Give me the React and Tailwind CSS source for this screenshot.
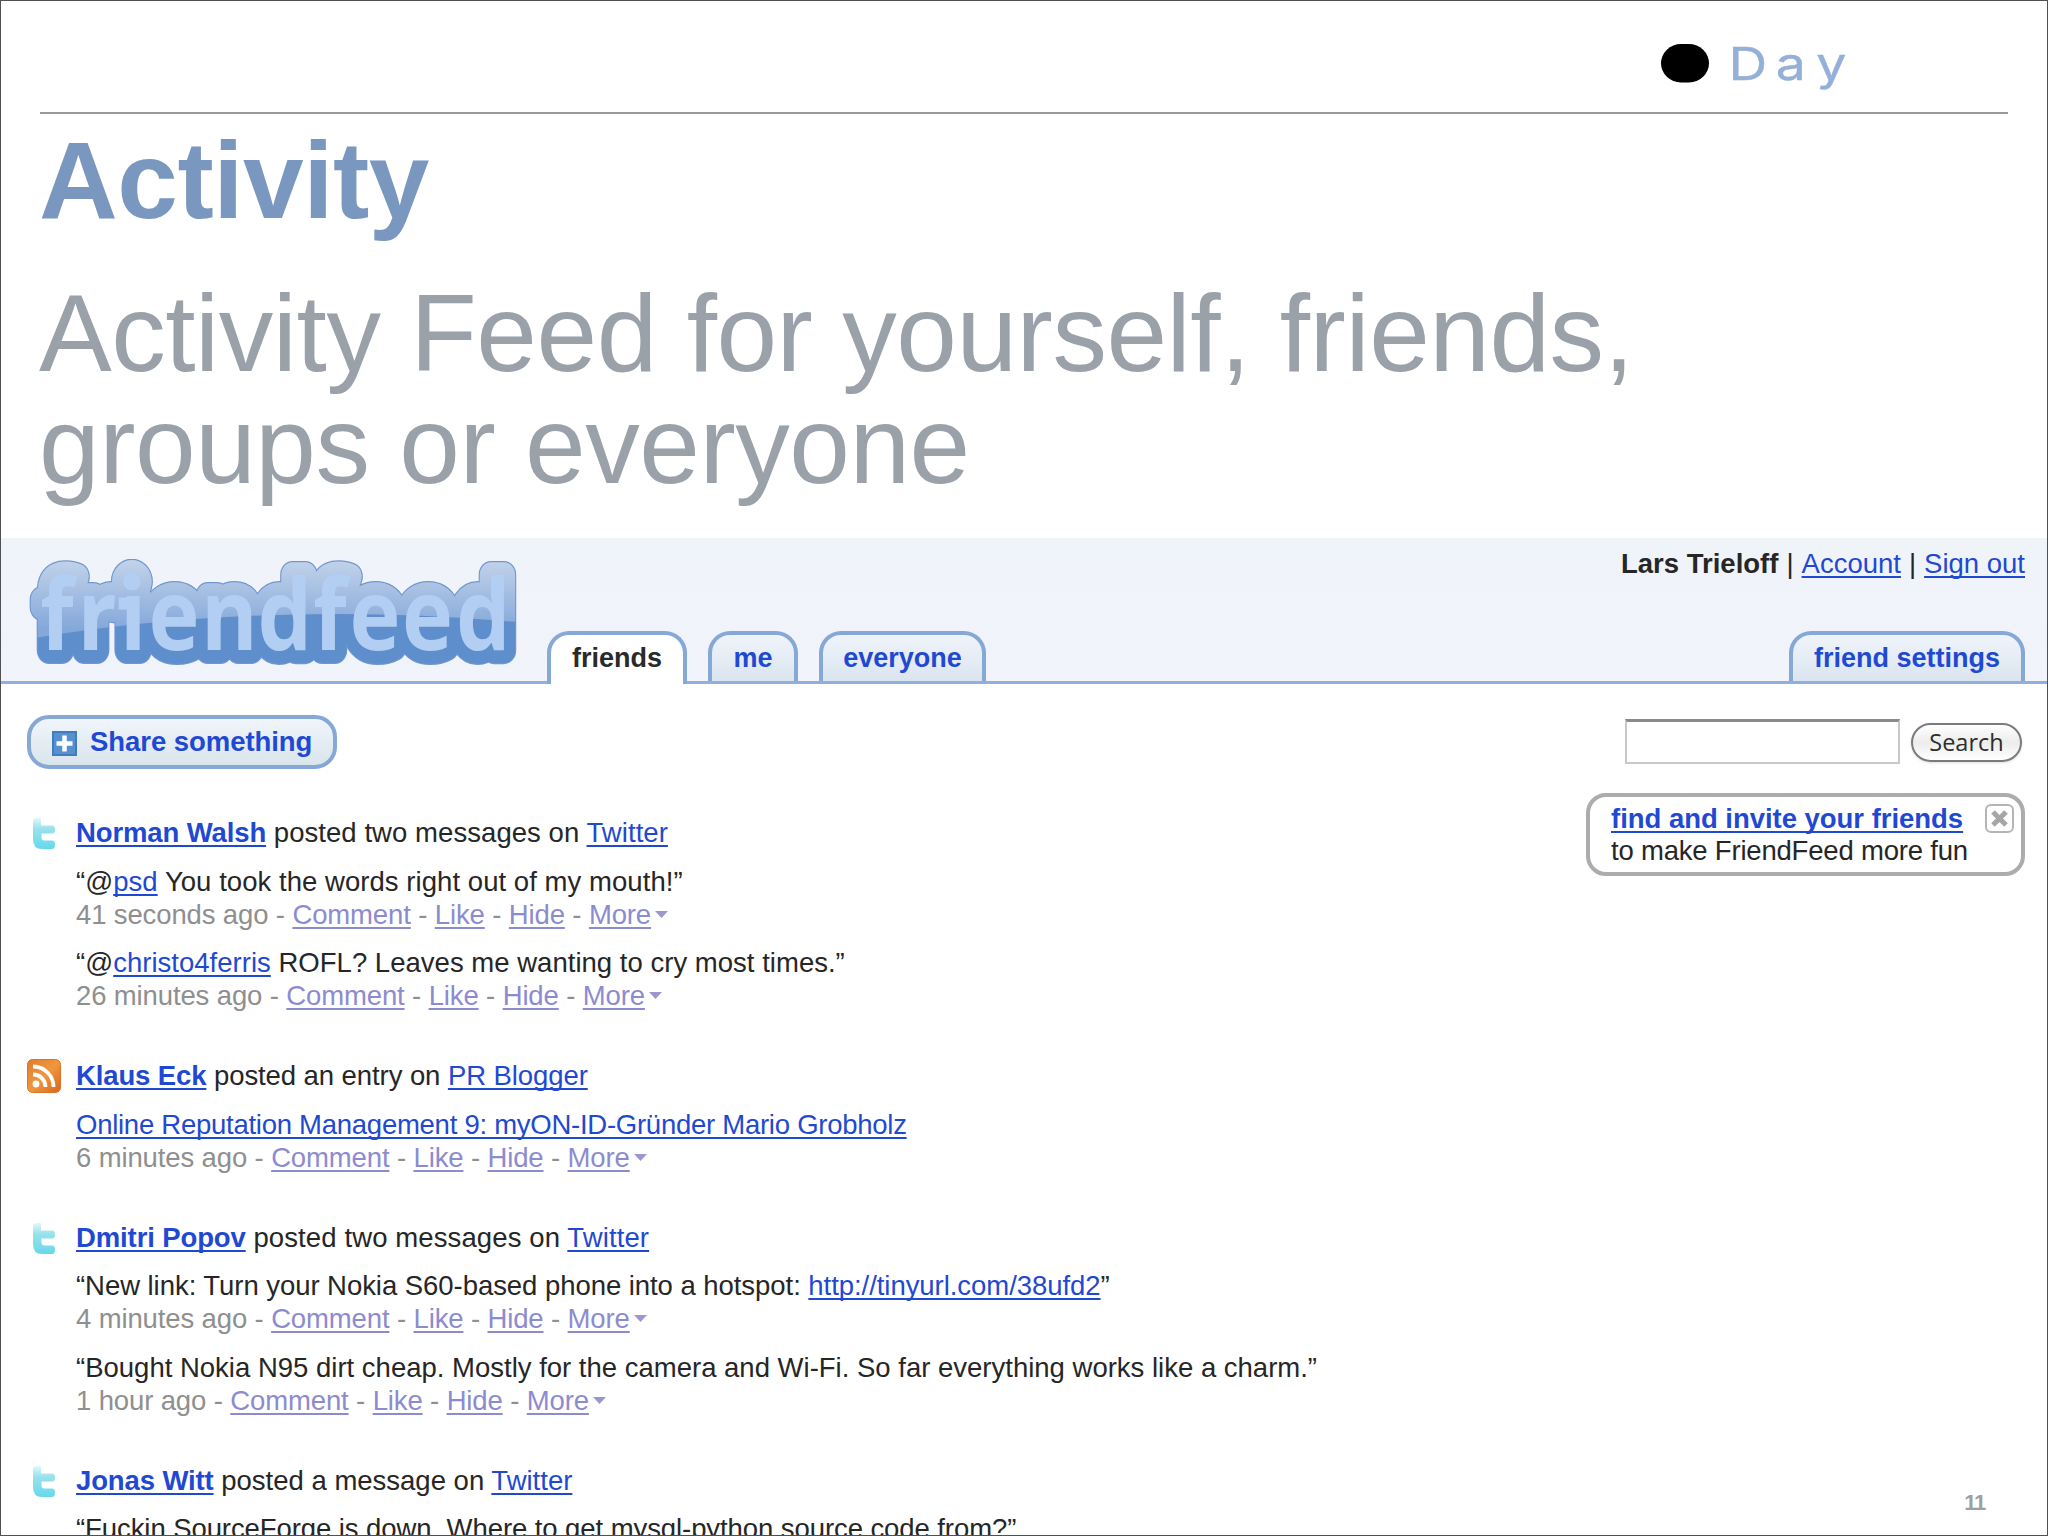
const LINK = "text-[#1f49d2] underline decoration-2 underline-offset-[3px] [text-decoration-skip-ink:none]";

const FEED = [
  {
    icon: "twitter", name: "Norman Walsh", verb: "posted two messages on", source: "Twitter", track: "tracking-[0.06px]",
    items: [
      { parts: ["“@", { text: "psd" }, " You took the words right out of my mouth!”"], time: "41 seconds ago", track: "tracking-[0.05px]" },
      { parts: ["“@", { text: "christo4ferris" }, " ROFL? Leaves me wanting to cry most times.”"], time: "26 minutes ago", track: "tracking-[0.02px]" },
    ],
  },
  {
    icon: "rss", name: "Klaus Eck", verb: "posted an entry on", source: "PR Blogger", track: "tracking-[-0.08px]",
    items: [{ parts: [{ text: "Online Reputation Management 9: myON-ID-Gründer Mario Grobholz" }], time: "6 minutes ago", track: "tracking-[-0.26px]" }],
  },
  {
    icon: "twitter", name: "Dmitri Popov", verb: "posted two messages on", source: "Twitter", track: "tracking-[0.11px]",
    items: [
      { parts: ["“New link: Turn your Nokia S60-based phone into a hotspot: ", { text: "http://tinyurl.com/38ufd2" }, "”"], time: "4 minutes ago", track: "tracking-[-0.05px]" },
      { parts: ["“Bought Nokia N95 dirt cheap. Mostly for the camera and Wi-Fi. So far everything works like a charm.”"], time: "1 hour ago", track: "" },
    ],
  },
  {
    icon: "twitter", name: "Jonas Witt", verb: "posted a message on", source: "Twitter", track: "",
    items: [{ parts: ["“Fuckin SourceForge is down. Where to get mysql-python source code from?”"], track: "tracking-[-0.08px]" }],
  },
];

function TwitterIcon() {
  return (
    <svg className="mt-[2px] ml-[6px] block h-[31px] w-[22px]" viewBox="0 0 22 31">
      <defs>
        <linearGradient id="tw" x1="0" y1="0" x2="0" y2="1">
          <stop offset="0" stopColor="#e2f7f9" />
          <stop offset=".35" stopColor="#98e2ec" />
          <stop offset="1" stopColor="#66d8ea" />
        </linearGradient>
      </defs>
      <path d="M0 3Q0 0 4 0H8V7.500H19Q22 7.500 22 11.500Q22 15.500 19 15.500H8.500V19Q8.500 22.500 11.500 22.500H19Q22 22.500 22 26.500Q22 31 19 31H9Q0 31 0 21Z" fill="url(#tw)" />
    </svg>
  );
}

function RssIcon() {
  return (
    <svg className="block size-[34px]" viewBox="0 0 34 34">
      <defs>
        <linearGradient id="rss" x1="0" y1="0" x2="1" y2="1">
          <stop offset="0" stopColor="#e27a2c" />
          <stop offset=".5" stopColor="#ee983e" />
          <stop offset="1" stopColor="#d9641c" />
        </linearGradient>
      </defs>
      <rect x=".5" y=".5" width="33" height="33" rx="5" fill="url(#rss)" stroke="#d9742e" />
      <circle cx="9" cy="25" r="3.400" fill="#fff" />
      <path d="M6 15.500A12.500 12.500 0 0 1 18.500 28M6 7.500A20.500 20.500 0 0 1 26.500 28" fill="none" stroke="#fff" strokeWidth="3.800" />
    </svg>
  );
}

const LOGO_X = [40.3, 77.5, 120, 148.5, 201, 257.5, 313.3, 349.5, 402, 456].map((x) => (x - 28) / 0.88).join(" ");

function LogoText(props) {
  return (
    <g transform="scale(.88 1)" strokeLinejoin="round" {...props}>
      <text x={LOGO_X} y="91" fontSize="98" fontWeight="700" fontFamily='"Open Sans", sans-serif'>
        friendfeed
      </text>
      {/* slab and heavier dot of the i */}
      <rect x="103" y="38.500" width="12" height="12" />
      <ellipse cx="118" cy="22.500" rx="9.800" ry="8.800" />
    </g>
  );
}

function FriendFeedLogo() {
  return (
    <svg className="block h-[112px] w-[500px]" viewBox="0 0 500 112">
      <defs>
        <linearGradient id="gloss" x1="0" y1="0" x2="0" y2="70" gradientUnits="userSpaceOnUse">
          <stop offset="0" stopColor="#c3d3ea" />
          <stop offset="1" stopColor="#84a8da" />
        </linearGradient>
        <linearGradient id="letters" x1="0" y1="10" x2="0" y2="95" gradientUnits="userSpaceOnUse">
          <stop offset="0" stopColor="#bdd6f3" />
          <stop offset="1" stopColor="#a9c7f2" />
        </linearGradient>
        <mask id="blob">
          <LogoText fill="#fff" stroke="#fff" strokeWidth="25.500" />
        </mask>
      </defs>
      <LogoText fill="#6f96cf" stroke="#6f96cf" strokeWidth="28" />
      <g mask="url(#blob)">
        <rect width="500" height="112" fill="#5e8ecb" />
        <path d="M0 0H500V64Q240 40 0 80Z" fill="url(#gloss)" />
      </g>
      <LogoText fill="#b3cef3" />
    </svg>
  );
}

function DayLogo() {
  return (
    <svg className="block h-[70px] w-[200px]" viewBox="0 0 200 70">
      <rect x="1" y="14" width="48" height="38.500" rx="20" fill="#000" />
      <text x="58 98 132.500" y="50.500" transform="scale(1.180 1)" fontSize="45.500" fontFamily="Inter, sans-serif" fill="#95b0d8" stroke="#95b0d8" strokeWidth=".4">Day</text>
    </svg>
  );
}

function Tab({ children, active, className }) {
  return (
    <div
      className={`flex justify-center rounded-t-[22px] border-x-[4px] border-t-[4px] border-[#85a8d6] pt-[6px] text-[27px] leading-[34px] font-bold ${
        active ? "mb-[-3px] h-[53px] bg-white text-[#2a2a2a]" : "h-[50px] bg-linear-to-b from-[#eff4fa] to-[#dbe5ef] text-[#1f49d2]"
      } ${className}`}
    >
      {children}
    </div>
  );
}

function Meta({ time }) {
  return (
    <div className="flex items-center text-[#8f8f8f]">
      <span className="tracking-[-0.13px] whitespace-pre">
        {time}
        {["Comment", "Like", "Hide", "More"].map((label) => (
          <span key={label}>
            {" - "}
            <a className="text-[#8d8bd0] underline decoration-2 underline-offset-[3px] [text-decoration-skip-ink:none]">{label}</a>
          </span>
        ))}
      </span>
      <svg className="ml-[4px] h-[7px] w-[13px]" viewBox="0 0 13 7">
        <path d="M0 0H13L6.500 7Z" fill="#9a98cf" />
      </svg>
    </div>
  );
}

function Entry({ entry }) {
  return (
    <div className="flex">
      <div className="w-[49px] shrink-0">{entry.icon === "rss" ? <RssIcon /> : <TwitterIcon />}</div>
      <div>
        <div className={`whitespace-pre ${entry.track}`}>
          <a className={`${LINK} font-bold tracking-[-0.12px]`}>{entry.name}</a> {entry.verb} <a className={LINK}>{entry.source}</a>
        </div>
        {entry.items.map((item, i) => (
          <div key={i} className="mt-[15.500px]">
            <div className={`whitespace-pre ${item.track}`}>
              {item.parts.map((part, j) => (part.text ? <a key={j} className={LINK}>{part.text}</a> : part))}
            </div>
            {item.time && <Meta time={item.time} />}
          </div>
        ))}
      </div>
    </div>
  );
}

export default function App() {
  return (
    <div className="flex h-[1536px] w-[2048px] flex-col overflow-hidden border border-[#505054] bg-white font-['Liberation_Sans',Arial,sans-serif] text-[27.5px] leading-[33px] text-[#262626]">
      <header className="mx-[39px] flex h-[113px] shrink-0 justify-end border-b-2 border-[#9b9b9b] pt-[29px] pr-[148px]">
        <DayLogo />
      </header>

      <div className="h-[424px] shrink-0 pl-[38px] text-[109px] tracking-[-0.47px]">
        <h1 className="pt-[5px] leading-[122px] font-bold text-[#7a98bf]">Activity</h1>
        <p className="mt-[36px] leading-[112px] whitespace-pre text-[#9aa1a8]">{"Activity Feed for yourself, friends,\ngroups or everyone"}</p>
      </div>

      {/* Site header with tabs */}
      <div className="flex h-[146px] shrink-0 justify-between border-b-[3px] border-[#8fb0da] bg-linear-to-b from-[#eff4f9] to-[#f2f3fb] pr-[22px] pl-[27px]">
        <div className="flex items-end">
          <div className="mb-[10px] w-[519px]">
            <FriendFeedLogo />
          </div>
          <div className="flex items-end gap-[21px]">
            <Tab active className="w-[140px]">friends</Tab>
            <Tab className="w-[90px]">me</Tab>
            <Tab className="w-[167px]">everyone</Tab>
          </div>
        </div>
        <div className="flex flex-col items-end justify-between pt-[9px]">
          <div className="flex gap-[8px]">
            <b>Lars Trieloff</b>
            <span>|</span>
            <a className={LINK}>Account</a>
            <span>|</span>
            <a className={LINK}>Sign out</a>
          </div>
          <Tab className="w-[236px]">friend settings</Tab>
        </div>
      </div>

      <div className="flex min-h-0 flex-1 justify-between pr-[22px] pl-[26px]">
        <div>
          <div className="mt-[31px] flex h-[54px] w-[310px] items-center rounded-[22px] border-[4px] border-[#85a8d6] bg-linear-to-b from-[#f0f5fb] to-[#d9e5ec] pl-[21px] font-bold tracking-[-0.05px] text-[#1f49d2]">
            <svg className="mt-[3px] mr-[13px] size-[25px]" viewBox="0 0 25 25">
              <rect x="1" y="1" width="23" height="23" fill="#5790d0" stroke="#3f7cc0" strokeWidth="2" />
              <path d="M12.500 4.500V20.500M4.500 12.500H20.500" stroke="#fff" strokeWidth="4.500" />
            </svg>
            <span className="pb-[2px]">Share something</span>
          </div>
          <div className="mt-[47.400px] flex flex-col gap-[46.900px]">
            {FEED.map((entry) => (
              <Entry key={entry.name} entry={entry} />
            ))}
          </div>
        </div>

        <aside className="flex flex-col items-end">
          <div className="mt-[35px] flex items-center gap-[11px]">
            <div className="h-[45px] w-[275px] border-2 border-t-[3px] border-[#c9c9cd] border-t-[#8a8a8e]" />
            <div className="mt-[1px] mr-[3px] flex h-[39px] w-[111px] items-center justify-center rounded-full border-[2px] border-[#7b7b7b] bg-linear-to-b from-white via-[#ececec] to-white font-['Open_Sans',sans-serif] text-[23.500px] text-[#2d2d2d] shadow-sm">
              Search
            </div>
          </div>
          <div className="mt-[29px] flex h-[83px] w-[439px] justify-between rounded-[20px] border-[4px] border-[#acacae] pt-[6px] pr-[7px] pl-[21px] leading-[32px]">
            <div>
              <div><a className={`${LINK} font-bold tracking-[-0.03px]`}>find and invite your friends</a></div>
              <div className="tracking-[-0.2px]">to make FriendFeed more fun</div>
            </div>
            <svg className="mt-[1px] size-[29px]" viewBox="0 0 29 29">
              <rect x="1" y="1" width="27" height="27" rx="5" fill="#fff" stroke="#b5b5b5" strokeWidth="2" />
              <path d="M8 8L21 21M21 8L8 21" stroke="#a6a6a6" strokeWidth="5" />
            </svg>
          </div>
          <div className="mt-auto mr-[40px] mb-[16px] text-[22px] font-bold tracking-[-1.200px] text-[#9d9fa3]">11</div>
        </aside>
      </div>
    </div>
  );
}
